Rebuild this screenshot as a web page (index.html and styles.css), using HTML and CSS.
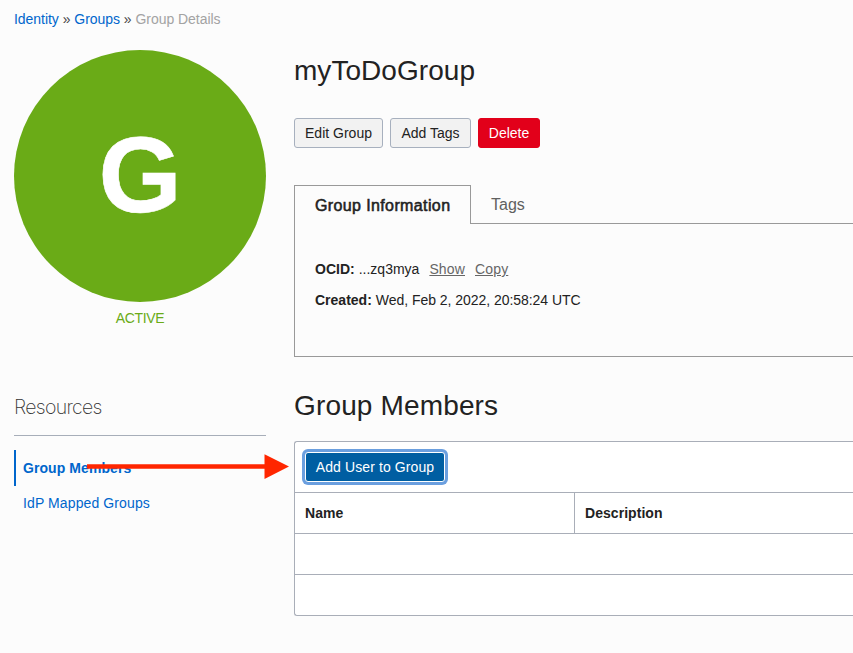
FILE: index.html
```html
<!DOCTYPE html>
<html lang="en">
<head>
<meta charset="utf-8">
<title>Group Details</title>
<link rel="stylesheet" href="styles.css">
</head>
<body>
<nav class="breadcrumb"><a class="link">Identity</a> <span class="sep">»</span> <a class="link">Groups</a> <span class="sep">»</span> <span class="current">Group Details</span></nav>
<div class="layout">
  <aside class="sidebar">
    <div class="avatar"><span class="avatar-letter">G</span></div>
    <div class="status">ACTIVE</div>
    <h2 class="resources-title">Resources</h2>
    <ul class="resources">
      <li class="resource active">Group Members</li>
      <li class="resource">IdP Mapped Groups</li>
    </ul>
  </aside>
  <main class="main">
    <h1 class="title">myToDoGroup</h1>
    <div class="actions">
      <button class="btn edit">Edit Group</button>
      <button class="btn tags">Add Tags</button>
      <button class="btn danger">Delete</button>
    </div>
    <div class="tabs">
      <div class="tab selected">Group Information</div>
      <div class="tab">Tags</div>
    </div>
    <section class="info">
      <div class="info-row"><b>OCID:</b><span>...zq3mya</span><a class="action">Show</a><a class="action">Copy</a></div>
      <div class="info-row"><b>Created:</b><span class="created-value">Wed, Feb 2, 2022, 20:58:24 UTC</span></div>
    </section>
    <h1 class="members-title">Group Members</h1>
    <section class="table">
      <div class="toolbar"><button class="btn primary">Add User to Group</button></div>
      <div class="row head"><div class="cell name">Name</div><div class="cell">Description</div></div>
      <div class="row"></div>
      <div class="row"></div>
    </section>
  </main>
</div>
<svg class="arrow" width="204" height="26" viewBox="0 0 204 26"><path d="M0 10.2H177.5V0.3L202 12.5 177.5 25V14.8H0Z" fill="#ff2600"/></svg>
</body>
</html>
```
FILE: styles.css
```css
* { box-sizing: border-box; }
html, body { height: 100%; }
body {
  margin: 0;
  padding-left: 14px;
  overflow: hidden;
  position: relative;
  background: #fcfcfc;
  color: #222;
  font: 14px/20px "Liberation Sans", Arial, sans-serif;
}
.breadcrumb { padding-top: 9px; height: 50px; white-space: nowrap; letter-spacing: -0.04px; }
.link { color: #0066cc; }
.sep { color: #444; }
.current { color: #a3a3a3; }
.layout { display: grid; grid-template-columns: 252px 1fr; column-gap: 28px; }
.avatar {
  width: 252px;
  height: 252px;
  border-radius: 50%;
  background: #6aab17;
  color: #fff;
  display: flex;
  align-items: center;
  justify-content: center;
}
.avatar-letter { font-size: 107px; font-weight: 700; line-height: 120px; margin-top: -2px; -webkit-text-stroke: 0.6px #fff; }
.status { height: 32px; line-height: 32px; text-align: center; color: #6aab17; letter-spacing: -0.35px; }
.resources-title {
  margin: 52px 0 14px;
  height: 50px;
  border-bottom: 1px solid #a7aeb9;
  font: 200 19.5px/43px Inter, "Liberation Sans", sans-serif;
  color: #333;
  letter-spacing: -0.7px;
}
.resources { list-style: none; margin: 0; padding: 0; color: #0066cc; }
.resource { height: 35px; line-height: 35px; padding-left: 9px; letter-spacing: 0.11px; }
.resource.active { height: 36px; line-height: 37px; padding-left: 7px; border-left: 2px solid #0066cc; font-weight: 700; letter-spacing: 0.07px; }
.title, .members-title { margin: 0; font-size: 28px; font-weight: 400; line-height: 42px; }
.title { letter-spacing: 0.05px; }
.actions { display: flex; gap: 7px; margin-top: 26px; }
.btn {
  height: 30px;
  padding: 0;
  border: 1px solid #a7b0be;
  border-radius: 3px;
  background: #f2f2f2;
  color: #222;
  font: 14px/20px "Liberation Sans", Arial, sans-serif;
  white-space: nowrap;
}
.edit { width: 89px; }
.tags { width: 81px; }
.danger { width: 62px; background: #e2001a; border-color: #e2001a; color: #fff; }
.tabs { display: flex; margin-top: 37px; height: 39px; font-size: 16px; line-height: 39px; }
.tab { flex: 1; padding-left: 20px; border-bottom: 1px solid #999; color: #606060; }
.tab.selected {
  flex: none;
  width: 177px;
  border: 1px solid #999;
  border-bottom: 0;
  color: #222;
  letter-spacing: 0.38px;
  -webkit-text-stroke: 0.55px #222;
}
.info { height: 133px; padding: 35px 20px 0; border-left: 1px solid #999; border-bottom: 1px solid #999; }
.info-row { display: flex; height: 31px; white-space: nowrap; }
.info-row b { margin-right: 4px; }
.created-value { letter-spacing: -0.04px; }
.action { margin-left: 10px; color: #666; text-decoration: underline; letter-spacing: 0.15px; }
.members-title { margin-top: 28px; letter-spacing: 0.15px; }
.table { margin-top: 14px; border: 1px solid #a9aeb8; border-right: 0; border-radius: 3px 0 0 3px; background: #fff; }
.toolbar { height: 50px; padding: 10px; }
.primary { width: 140px; background: #005ea2; border-color: #fff; color: #fff; box-shadow: 0 0 0 3px #6b9fdf; letter-spacing: 0.1px; }
.row { height: 41px; border-top: 1px solid #a9aeb8; display: flex; }
.cell { padding-left: 10px; font-weight: 700; line-height: 40px; letter-spacing: 0.05px; }
.name { width: 280px; border-right: 1px solid #a9aeb8; }
.arrow { position: absolute; left: 87px; top: 454px; }
```
